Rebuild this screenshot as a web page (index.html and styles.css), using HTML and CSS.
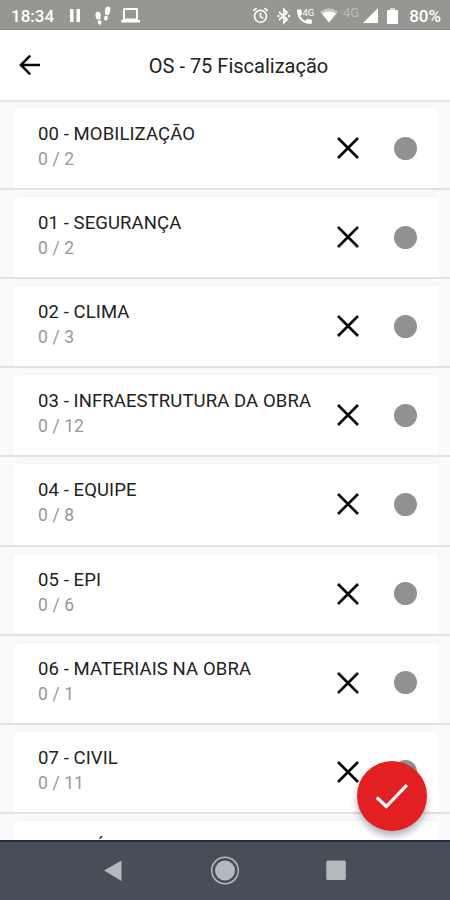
FILE: index.html
```html
<!DOCTYPE html>
<html lang="pt-BR">
<head>
<meta charset="utf-8">
<title>OS - 75 Fiscalização</title>
<link rel="stylesheet" href="styles.css">
</head>
<body>
<svg class="defs" aria-hidden="true">
  <symbol id="close" viewBox="0 0 24 24"><path d="M2 2L22 22M22 2L2 22" fill="none" stroke="#0a0a0a" stroke-width="2.700"/></symbol>
</svg>
<div class="screen">
  <div class="status">
    <span class="time">18:34</span>
    <svg class="pause" viewBox="0 0 10 13"><path d="M0 0h3.500v13H0zM6.500 0H10v13H6.500z"/></svg>
    <svg class="steps" viewBox="0 0 16 20"><path d="M.5 8.500C.5 6.500 1.500 5.500 3.300 5.700C5.200 6 6 8 5.800 10L5.300 13.300L2.200 13.800C1 12 .5 10.500 .5 8.500zM2.600 14.800L5.700 14.300L6.500 16.600C6.700 19 3.600 19.600 3 17.300zM15.300 3.500C15.500 1.300 14.300 .2 12.700 .5C10.700 .9 10 3 10 5L10.200 8.700L13.400 9.300C14.600 7.500 15.200 5.500 15.300 3.500zM13 10.400L9.900 9.800L9 12.200C8.600 14.700 11.900 15.400 12.600 13z"/></svg>
    <svg class="laptop" viewBox="0 0 19 15"><path fill-rule="evenodd" d="M2 1.200Q2 0 3.200 0h12.600Q17 0 17 1.200V12h2v1.600Q19 14.500 18 14.500H1Q0 14.500 0 13.600V12h2zM4 2v8.500h11V2z"/></svg>
    <svg class="alarm" viewBox="0 0 18 18"><g fill="none" stroke="#fff" stroke-width="1.700"><circle cx="9" cy="9.800" r="6.300"/><path d="M9 6v4.200l3 1.800M1.200 4.200L4.900 1.200M16.800 4.200L13.100 1.200"/></g></svg>
    <svg class="bluetooth" viewBox="0 0 14 18"><path fill="none" stroke="#fff" stroke-width="1.700" d="M2 5L10.200 12.500L6.800 15.700V2.300L10.200 5.500L2 13"/><circle cx="1.500" cy="9" r="1.200"/><circle cx="12" cy="9" r="1.200"/></svg>
    <svg class="call" viewBox="0 0 18 18"><path d="M1 3.500Q1 2.500 2 2.500h2.500q.8 0 .9.800q.1 1.700.6 3q.2.600-.3 1.100L4.300 9q1.700 3.200 4.900 4.900l1.600-1.700q.5-.4 1.100-.2q1.400.5 3 .6q.9.100.9.900V16q0 1-1 1C6.500 17 1 11 1 3.500z"/><text x="6.500" y="9" class="tiny">4G</text></svg>
    <svg class="wifi" viewBox="0 0 18 15"><path opacity=".45" d="M0 3.700Q9-3.300 18 3.700L9 14.500z"/><path d="M2 5.800Q9 1.300 16 5.800L9 14.500z"/></svg>
    <span class="net">4G</span>
    <svg class="signal" viewBox="0 0 15 15"><path d="M15 0v15H0z"/></svg>
    <svg class="battery" viewBox="0 0 11 16"><path opacity=".6" d="M3 0h5v2H3z"/><path d="M1 2h9q1 0 1 1v12q0 1-1 1H1q-1 0-1-1V3q0-1 1-1z"/></svg>
    <span class="percent">80%</span>
  </div>
  <header class="header">
    <svg class="back" viewBox="0 0 22 22"><path d="M11.200 1.600L1.900 11L11.200 20.400M2.200 11H21" fill="none" stroke="#080808" stroke-width="2.500"/></svg>
    <h1>OS - 75 Fiscalização</h1>
  </header>
  <main class="list">
    <div class="row"><div class="card"><div class="text"><p class="name">00 - MOBILIZAÇÃO</p><p class="count">0 / 2</p></div><svg class="x"><use href="#close"/></svg><span class="dot"></span></div></div>
    <div class="row"><div class="card"><div class="text"><p class="name">01 - SEGURANÇA</p><p class="count">0 / 2</p></div><svg class="x"><use href="#close"/></svg><span class="dot"></span></div></div>
    <div class="row"><div class="card"><div class="text"><p class="name">02 - CLIMA</p><p class="count">0 / 3</p></div><svg class="x"><use href="#close"/></svg><span class="dot"></span></div></div>
    <div class="row"><div class="card"><div class="text"><p class="name">03 - INFRAESTRUTURA DA OBRA</p><p class="count">0 / 12</p></div><svg class="x"><use href="#close"/></svg><span class="dot"></span></div></div>
    <div class="row"><div class="card"><div class="text"><p class="name">04 - EQUIPE</p><p class="count">0 / 8</p></div><svg class="x"><use href="#close"/></svg><span class="dot"></span></div></div>
    <div class="row"><div class="card"><div class="text"><p class="name">05 - EPI</p><p class="count">0 / 6</p></div><svg class="x"><use href="#close"/></svg><span class="dot"></span></div></div>
    <div class="row"><div class="card"><div class="text"><p class="name">06 - MATERIAIS NA OBRA</p><p class="count">0 / 1</p></div><svg class="x"><use href="#close"/></svg><span class="dot"></span></div></div>
    <div class="row"><div class="card"><div class="text"><p class="name">07 - CIVIL</p><p class="count">0 / 11</p></div><svg class="x"><use href="#close"/></svg><span class="dot"></span></div></div>
    <div class="row"><div class="card"><div class="text"><p class="name">08 - ELÉTRICA</p></div></div></div>
  </main>
  <nav class="nav">
    <svg viewBox="0 0 30 30"><path d="M5 14.500L22.500 4.500v20.500z"/></svg>
    <svg viewBox="0 0 30 30"><circle cx="15" cy="14.500" r="13.300" fill="none" stroke="#b4babd" stroke-width="1.500"/><circle cx="15" cy="14.500" r="10"/></svg>
    <svg viewBox="0 0 30 30"><rect x="5.300" y="4.500" width="19.500" height="19.500" rx="1.500"/></svg>
  </nav>
  <button class="fab" aria-label="Confirmar"><svg viewBox="0 0 34 26"><path d="M1.800 14.500L11.300 23.500L31.800 2.200" fill="none" stroke="#fff" stroke-width="3.200"/></svg></button>
</div>
</body>
</html>
```
FILE: styles.css
```css
* { box-sizing: border-box; margin: 0; padding: 0; }
body { font-family: Roboto, "Liberation Sans", sans-serif; background: #fff; }
svg { display: block; flex: none; }
.defs { position: absolute; width: 0; height: 0; }
.screen {
  position: relative;
  width: 450px;
  height: 900px;
  overflow: hidden;
  display: flex;
  flex-direction: column;
}

.status {
  flex: none;
  height: 30px;
  background: #969693;
  border-bottom: 1px solid #898986;
  display: flex;
  align-items: center;
  padding: 2px 9px 0 11px;
  color: #fff;
  font-size: 17px;
  font-weight: 500;
}
.status svg { fill: #fff; }
.time { width: 59px; }
.pause { width: 10px; height: 13px; }
.steps { width: 16px; height: 20px; margin-left: 15px; }
.laptop { width: 19px; height: 15px; margin-left: 10px; }
.alarm { width: 17px; height: 17px; margin-left: 112px; }
.bluetooth { width: 14px; height: 18px; margin-left: 8px; }
.call { width: 18px; height: 18px; margin-left: 5px; overflow: visible; }
.tiny { font-size: 9.5px; font-weight: 400; }
.wifi { width: 18px; height: 15px; margin-left: 6px; }
.net {
  width: 19px;
  margin-left: 5px;
  font-size: 13px;
  font-weight: 400;
  color: #bcbcba;
  align-self: flex-start;
  line-height: 18px;
  margin-top: 2px;
}
.signal { width: 15px; height: 15px; margin-left: 1px; }
.battery { width: 11px; height: 16px; margin-left: 9px; }
.percent { margin-left: auto; letter-spacing: 0; }

.header {
  flex: none;
  height: 72px;
  border-bottom: 2px solid #e9e9e9;
  padding: 0 19px;
  display: grid;
  grid-template-columns: 22px 1fr;
  column-gap: 5px;
  align-items: center;
}
.back { width: 22px; height: 22px; }
.header h1 {
  font-size: 20px;
  font-weight: 400;
  color: #222;
  text-align: center;
  white-space: nowrap;
  padding-top: 1px;
}

.list { flex: 1; min-height: 0; overflow: hidden; background: #f9f9f9; }
.row {
  height: 89.15px;
  padding: 6px 11px 0 14px;
  border-bottom: 2px solid #e2e2e2;
}
.row:first-child { height: 88px; padding-top: 5px; }
.card {
  height: 100%;
  display: flex;
  align-items: center;
  background: #fff;
  border-top: 1px solid #f5f5f5;
  border-radius: 5px 5px 0 0;
  padding: 0 22.5px 0 24px;
}
.text { flex: 1; align-self: flex-start; padding-top: 14px; white-space: nowrap; }
.name { font-size: 18.5px; line-height: 25px; color: #222; letter-spacing: .1px; }
.count { font-size: 17.5px; line-height: 24px; color: #999; letter-spacing: .1px; }
.x { width: 24px; height: 24px; margin-right: 33.5px; }
.dot { width: 23px; height: 23px; border-radius: 50%; background: #919191; }

.nav {
  flex: none;
  height: 60px;
  background: #464e57;
  border-top: 2px solid #20313e;
  padding: 0 58px;
  display: flex;
  justify-content: space-around;
  align-items: center;
}
.nav svg { width: 30px; height: 30px; fill: #b4babd; }

.fab {
  position: absolute;
  left: 357px;
  top: 761px;
  width: 70px;
  height: 70px;
  border: 0;
  border-radius: 50%;
  background: #e21f22;
  box-shadow: 0 5px 7px rgba(0, 0, 0, .3);
  display: flex;
  align-items: center;
  justify-content: center;
}
.fab svg { width: 34px; height: 26px; }
```
